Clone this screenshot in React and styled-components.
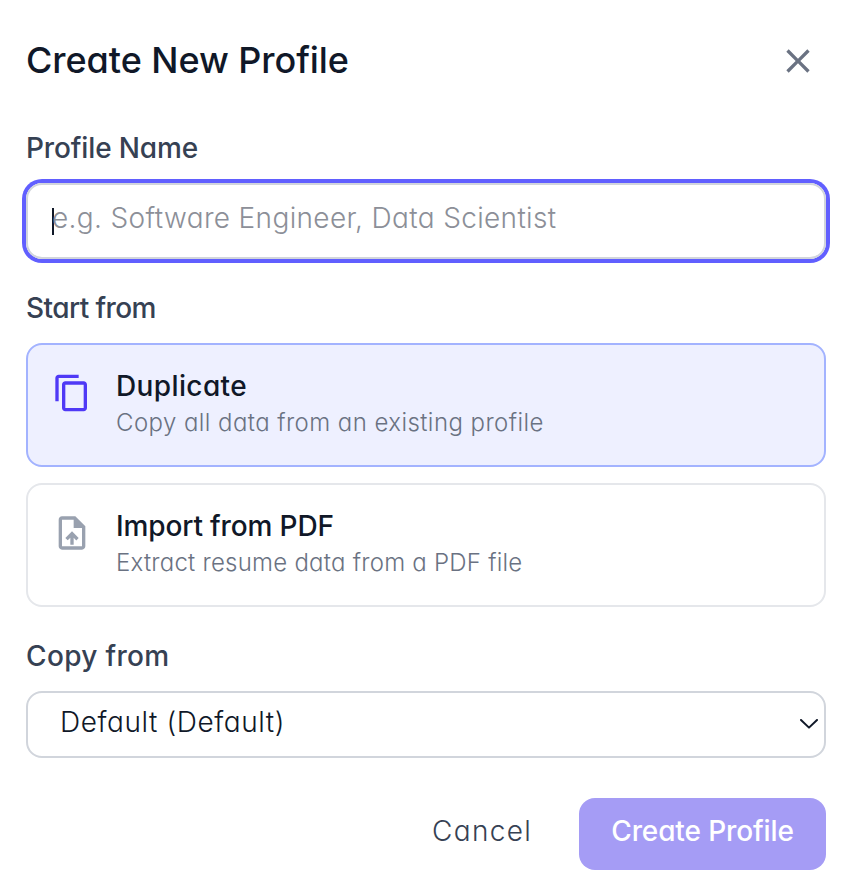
import React from 'react'
import { useState } from 'react'
import styled, { createGlobalStyle } from 'styled-components';
import { MdClose, MdContentCopy, MdUploadFile } from 'react-icons/md'

const options = [
  { id: 'duplicate', title: 'Duplicate', titleSpacing: '0.38px', text: 'Copy all data from an existing profile', textSpacing: '0.43px', icon: MdContentCopy },
  { id: 'import', title: 'Import from PDF', titleSpacing: '-0.13px', text: 'Extract resume data from a PDF file', textSpacing: '0.24px', icon: MdUploadFile },
]

const App = () => {
  const [name, setName] = useState('')
  const [source, setSource] = useState('duplicate')

  return (
    <>
      <GlobalStyle />
      <Modal>
        <Header>
          <Title>Create New Profile</Title>
          <CloseButton aria-label="Close"><MdClose size={40} /></CloseButton>
        </Header>

        <Label $spacing="-0.14px">Profile Name</Label>
        <Field>
          {name === '' && <Caret />}
          <Input
            value={name}
            placeholder="e.g. Software Engineer, Data Scientist"
            onChange={(e) => setName(e.target.value)}
          />
        </Field>

        <Label $top={25} $spacing="-0.58px">Start from</Label>
        <Options>
          {options.map(({ id, title, titleSpacing, text, textSpacing, icon: Icon }) => (
            <Option key={id} $active={source === id} onClick={() => setSource(id)}>
              <Icon size={40} />
              <div>
                <OptionTitle $spacing={titleSpacing}>{title}</OptionTitle>
                <OptionText $spacing={textSpacing}>{text}</OptionText>
              </div>
            </Option>
          ))}
        </Options>

        <Label $top={29} $spacing="0.34px">Copy from</Label>
        <Select>
          <span>Default (Default)</span>
          <Chevron viewBox="0 0 18 10">
            <path d="M1 1l8 7.6L17 1" />
          </Chevron>
        </Select>

        <Footer>
          <CancelButton>Cancel</CancelButton>
          <CreateButton>Create Profile</CreateButton>
        </Footer>
      </Modal>
    </>
  )
}

const GlobalStyle = createGlobalStyle`
  * {
    box-sizing: border-box;
  }
  body {
    margin: 0;
    background: #fff;
    font-family: Inter, "Liberation Sans", sans-serif;
    font-feature-settings: "cv11";
  }
  button, input {
    font: inherit;
    font-feature-settings: inherit;
  }
`

const Modal = styled.div`
  width: 854px;
  height: 882px;
  padding: 40px 28px 12px 26px;
  display: flex;
  flex-direction: column;
  overflow: hidden;
`

const Header = styled.div`
  height: 40px;
  margin-bottom: 48px;
  display: flex;
  align-items: center;
  justify-content: space-between;
`

const Title = styled.h2`
  margin: 0;
  font-size: 36px;
  font-weight: 500;
  line-height: 40px;
  letter-spacing: -0.06px;
  color: #101828;
`

const CloseButton = styled.button`
  display: flex;
  margin: 2px 8px 0 0;
  padding: 0;
  border: 0;
  background: none;
  color: #6a7282;
`

const Label = styled.label`
  margin-top: ${(p) => p.$top || 0}px;
  margin-bottom: 15px;
  font-size: 28px;
  font-weight: 500;
  line-height: 40px;
  letter-spacing: ${(p) => p.$spacing};
  color: #364153;
`

const Field = styled.div`
  height: 76px;
  margin-bottom: 4px;
  padding: 0 24px 7px;
  display: flex;
  align-items: center;
  border: 2px solid #d1d5dc;
  border-radius: 16px;
  box-shadow: 0 0 0 4px #615fff;
`

const Caret = styled.span`
  width: 2px;
  height: 27px;
  margin: 7px -2px 0 0;
  background: #101828;
`

const Input = styled.input`
  flex: 1;
  min-width: 0;
  height: 40px;
  padding: 0;
  border: 0;
  outline: none;
  background: transparent;
  font-size: 28px;
  font-weight: 300;
  letter-spacing: 0.34px;
  color: #101828;

  &::placeholder {
    color: #8c8f98;
    opacity: 1;
  }
`

const Options = styled.div`
  display: flex;
  flex-direction: column;
  gap: 16px;
`

const Option = styled.button`
  height: 124px;
  padding: 21px 24px;
  display: flex;
  align-items: flex-start;
  gap: 24px;
  text-align: left;
  border: 2px solid ${(p) => (p.$active ? '#a3b3ff' : '#e5e7eb')};
  border-radius: 16px;
  background: ${(p) => (p.$active ? '#eef0ff' : '#fff')};

  svg {
    flex: none;
    margin-top: 7px;
    color: ${(p) => (p.$active ? '#4f39f6' : '#99a1af')};
  }
`

const OptionTitle = styled.div`
  font-size: 28px;
  font-weight: 500;
  line-height: 40px;
  letter-spacing: ${(p) => p.$spacing};
  color: #101828;
`

const OptionText = styled.div`
  margin-top: 1px;
  font-size: 24px;
  font-weight: 300;
  line-height: 32px;
  letter-spacing: ${(p) => p.$spacing};
  color: #6a7282;
`

const Select = styled.div`
  height: 67px;
  padding: 0 6px 5px 32px;
  display: flex;
  align-items: center;
  justify-content: space-between;
  border: 2px solid #d1d5dc;
  border-radius: 16px;
  font-size: 28px;
  font-weight: 300;
  letter-spacing: 0.56px;
  color: #101828;
`

const Chevron = styled.svg`
  width: 18px;
  height: 10px;
  margin-top: 4px;
  fill: none;
  stroke: #101828;
  stroke-width: 2;
  stroke-linecap: round;
  stroke-linejoin: round;
`

const Footer = styled.div`
  margin-top: 40px;
  display: flex;
  justify-content: flex-end;
  gap: 16px;
`

const CancelButton = styled.button`
  height: 72px;
  padding: 0 31px 6px;
  border: 0;
  background: none;
  font-size: 28px;
  font-weight: 300;
  letter-spacing: 1.3px;
  color: #364153;
`

const CreateButton = styled.button`
  width: 247px;
  height: 72px;
  padding: 0 0 6px;
  border: 0;
  border-radius: 16px;
  background: #a59cf5;
  font-size: 28px;
  font-weight: 500;
  letter-spacing: -0.12px;
  white-space: nowrap;
  color: #fff;
`

export default App
